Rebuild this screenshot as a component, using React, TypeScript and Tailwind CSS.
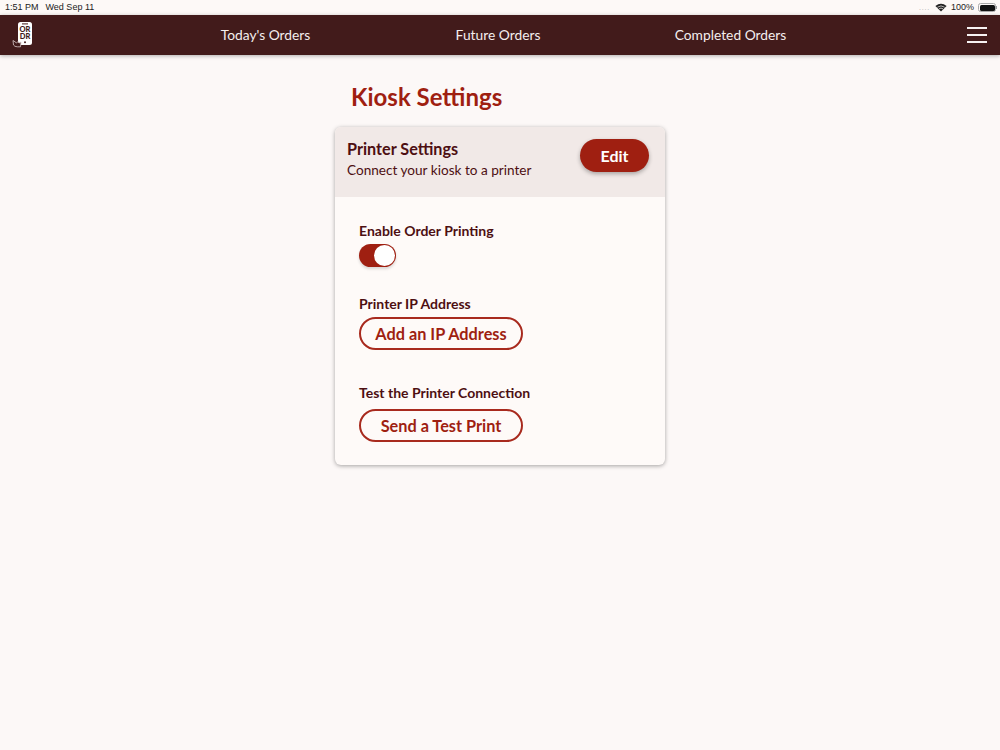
import React from "react";

function Logo() {
  return (
    <svg width="24" height="28" viewBox="0 0 24 28" className="block">
      <rect x="7" y="1" width="14" height="23" rx="2.5" fill="#fff" />
      <rect x="11" y="2.4" width="6" height="1" fill="#421b1b" />
      <text x="14" y="10.5" textAnchor="middle" fontSize="7.5" fontWeight="900" fill="#421b1b" fontFamily="Lato">OR</text>
      <text x="14" y="17.5" textAnchor="middle" fontSize="7.5" fontWeight="900" fill="#421b1b" fontFamily="Lato">DR</text>
      <circle cx="14" cy="21.3" r="1" fill="#421b1b" />
      <path d="M2 19.5 L2.5 24 Q3.5 25.8 6.5 25.8 L9.5 25.8 L10 21 L8 22 L7 20.5 L5.5 22 L4 20.8 Z" fill="#421b1b" stroke="#d8c9c9" strokeWidth="0.8" />
    </svg>
  );
}

function StatusBar() {
  return (
    <div className="h-[15px] bg-[#fdf9f7] flex items-center justify-between pl-[5px] pr-[3px] text-[9px] leading-none text-[#222]" style={{ fontFamily: '"Liberation Sans", sans-serif' }}>
      <div className="flex gap-[7px]">
        <span>1:51 PM</span>
        <span>Wed Sep 11</span>
      </div>
      <div className="flex items-center gap-[3px]">
        <span className="text-[#aaa] tracking-[0.8px] mr-[2px] text-[7px]">....</span>
        <svg width="12" height="9" viewBox="0 0 12 9">
          <path d="M6 8.6 L0.4 3 Q6 -1.4 11.6 3 Z" fill="#222" />
          <path d="M2.4 4.2 Q6 1.6 9.6 4.2" stroke="#fdf9f7" strokeWidth="0.7" fill="none" />
          <path d="M4 5.8 Q6 4.4 8 5.8" stroke="#fdf9f7" strokeWidth="0.7" fill="none" />
        </svg>
        <span className="ml-[1px]">100%</span>
        <div className="flex items-center ml-[1px]">
          <div className="w-[18px] h-[9px] rounded-[2.5px] border border-[#aaa] p-[0.5px]">
            <div className="w-full h-full rounded-[1.5px] bg-[#111]" />
          </div>
          <div className="w-[1px] h-[3px] bg-[#999]" />
        </div>
      </div>
    </div>
  );
}

function NavBar() {
  return (
    <div className="h-[40px] bg-[#421b1b] shadow-[0_1px_4px_rgba(0,0,0,0.3)] relative flex items-center pl-[11px] pr-[13px]">
      <Logo />
      <div className="flex-1 flex justify-center ml-[-6px] text-[13.8px] text-[#f4eeee]">
        <span className="w-[232.5px] text-center">Today's Orders</span>
        <span className="w-[232.5px] text-center">Future Orders</span>
        <span className="w-[232.5px] text-center">Completed Orders</span>
      </div>
      <div className="flex flex-col gap-[5px] w-[20px]">
        <div className="h-[2px] bg-[#f6f1f1]" />
        <div className="h-[2px] bg-[#f6f1f1]" />
        <div className="h-[2px] bg-[#f6f1f1]" />
      </div>
    </div>
  );
}

function Toggle() {
  return (
    <div className="w-[37px] h-[23px] rounded-full bg-[#9f1f11] relative shadow-[0_2px_3px_rgba(0,0,0,0.15)]">
      <div className="absolute right-[1px] top-[1px] w-[21px] h-[21px] rounded-full bg-white" />
    </div>
  );
}

function OutlineButton({ children }: { children: React.ReactNode }) {
  return (
    <div className="w-[164px] h-[33px] rounded-full border-2 border-[#a82a1e] flex items-center justify-center text-[16.3px] font-bold text-[#9f1f11]">
      {children}
    </div>
  );
}

export default function App() {
  return (
    <div className="min-h-[750px] bg-[#fcf8f7]" style={{ fontFamily: 'Lato, sans-serif' }}>
      <StatusBar />
      <NavBar />
      <div className="w-[330px] mx-auto">
        <h1 className="pl-[16px] pt-[27px] h-[72px] text-[24px] leading-[30px] font-bold text-[#9f1f11]">Kiosk Settings</h1>
        <div className="rounded-[6px] overflow-hidden bg-[#fefaf8] shadow-[0_1px_4px_rgba(0,0,0,0.35)] h-[338px]">
          <div className="h-[70px] bg-[#f1e9e7] flex items-start justify-between pl-[12px] pr-[16px] pt-[12px]">
            <div className="text-[#4d0f12]">
              <div className="text-[16.2px] font-bold leading-[20px]">Printer Settings</div>
              <div className="text-[13.6px] leading-[18px] mt-[2px]">Connect your kiosk to a printer</div>
            </div>
            <div className="w-[69px] h-[33px] rounded-full bg-[#9f1f11] text-white font-bold text-[16px] flex items-center justify-center shadow-[0_2px_4px_rgba(0,0,0,0.3)]">Edit</div>
          </div>
          <div className="pl-[24px] pt-[25px] text-[#4d0f12] text-[14px] font-bold leading-[18px]">
            <div>Enable Order Printing</div>
            <div className="mt-[4px]"><Toggle /></div>
            <div className="mt-[28px]">Printer IP Address</div>
            <div className="mt-[4px]"><OutlineButton>Add an IP Address</OutlineButton></div>
            <div className="mt-[34px]">Test the Printer Connection</div>
            <div className="mt-[7px]"><OutlineButton>Send a Test Print</OutlineButton></div>
          </div>
        </div>
      </div>
    </div>
  );
}
